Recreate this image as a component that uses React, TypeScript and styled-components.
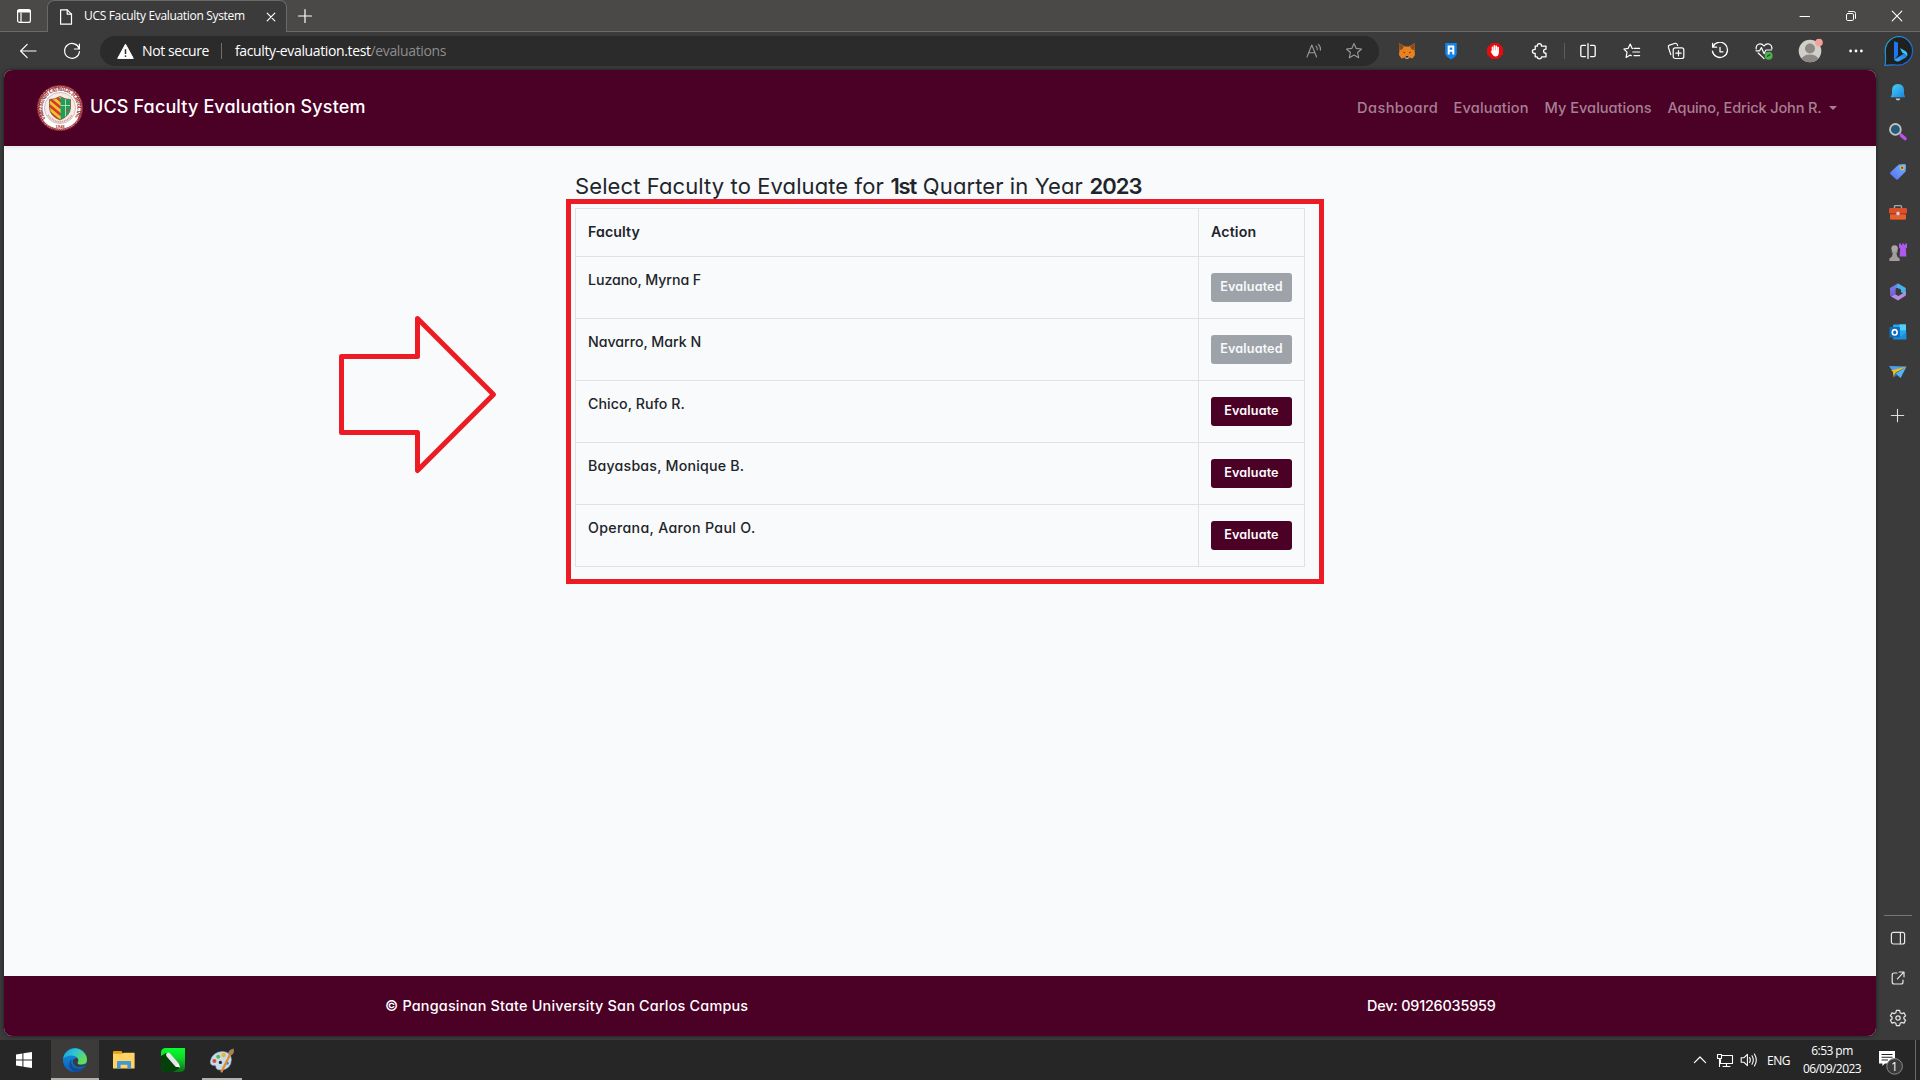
import React from 'react';
import styled, { createGlobalStyle } from 'styled-components';

const MAROON = '#4b0026';
const POP = `Inter, 'Open Sans', sans-serif`;
const UI = `'Open Sans', 'Noto Sans', sans-serif`;

const Global = createGlobalStyle`
  * { box-sizing: border-box; }
  html, body { margin: 0; padding: 0; }
  body { width: 1920px; height: 1080px; overflow: hidden; background: #3b3b3b; font-family: ${UI}; }
  svg { display: block; flex: none; }
`;

const Screen = styled.div`
  position: relative;
  width: 1920px;
  height: 1080px;
  display: flex;
  flex-direction: column;
`;

/* browser chrome */
const TabStrip = styled.header`
  height: 32px;
  display: flex;
  align-items: flex-end;
  background: #4b4947;
  box-shadow: inset 0 -1px 0 #6b6a68;
`;
const StripCell = styled.div<{ $w: number }>`
  width: ${p => p.$w}px;
  height: 32px;
  display: flex;
  align-items: center;
  justify-content: center;
`;
const Tab = styled.div`
  width: 240px;
  height: 32px;
  display: flex;
  align-items: center;
  padding: 0 9px 0 10px;
  background: #3b3b3b;
  border: 1px solid #6b6a68;
  border-bottom: 0;
  border-radius: 7px 7px 0 0;
`;
const TabTitle = styled.span`
  flex: 1;
  margin: -2px 0 0 10px;
  color: #fff;
  font-size: 12px;
  line-height: 16px;
  letter-spacing: -0.33px;
  white-space: nowrap;
`;
const Spacer = styled.div`
  flex: 1;
`;
const Toolbar = styled.div`
  height: 38px;
  display: flex;
  align-items: center;
  background: #3b3b3b;
`;
const ToolCell = styled.div<{ $w?: number }>`
  width: ${p => p.$w ?? 44}px;
  height: 38px;
  display: flex;
  align-items: center;
  justify-content: center;
`;
const Address = styled.div`
  width: 1279px;
  height: 30px;
  margin: 0 6px 0 5px;
  display: flex;
  align-items: center;
  padding-left: 17px;
  border-radius: 15px;
  background: #2b2b2b;
  color: #fff;
  font-size: 14px;
  white-space: nowrap;
`;
const Security = styled.span`
  margin: -1px 0 0 8px;
  width: 79px;
  letter-spacing: -0.4px;
`;
const Bar = styled.i<{ $h: number; $c: string }>`
  width: 1px;
  height: ${p => p.$h}px;
  background: ${p => p.$c};
`;
const Url = styled.span`
  flex: 1;
  margin: -1px 0 0 13px;
  letter-spacing: -0.37px;
  em { font-style: normal; color: #8d8d8d; }
`;

const Middle = styled.div`
  height: 970px;
  display: flex;
  padding-left: 4px;
  background: #3b3b3b;
`;
const Sidebar = styled.aside`
  width: 44px;
  height: 970px;
  display: flex;
  flex-direction: column;
  align-items: center;
  padding: 2px 0 2px;
`;
const SideCell = styled.div<{ $h?: number }>`
  height: ${p => p.$h ?? 40}px;
  display: flex;
  align-items: center;
  justify-content: center;
`;
const SideRule = styled.i`
  width: 28px;
  height: 1px;
  margin-bottom: 2px;
  background: #767676;
`;

/* web page */
const Page = styled.div`
  width: 1872px;
  height: 966px;
  display: flex;
  flex-direction: column;
  border-radius: 8px;
  overflow: hidden;
  background: #f8fafc;
  box-shadow: 0 0 4px rgba(0, 0, 0, 0.5);
  font-family: ${POP};
  font-feature-settings: 'cv11';
  color: #212529;
`;
const Navbar = styled.nav`
  height: 76px;
  display: flex;
  align-items: center;
  padding: 0 39px 0 32px;
  background: ${MAROON};
  box-shadow: 0 2px 4px rgba(0, 0, 0, 0.075);
`;
const Brand = styled.span`
  flex: 1;
  margin: -3px 0 0 6px;
  color: #fff;
  font-size: 18px;
  font-weight: 450;
  letter-spacing: 0.14px;
`;
const NavLinks = styled.div`
  display: flex;
  align-items: center;
  gap: 16px;
`;
const NavLink = styled.a<{ $w: number; $ls: number }>`
  width: ${p => p.$w}px;
  display: flex;
  align-items: center;
  line-height: 18px;
  color: #a58092;
  font-size: 14.6px;
  font-weight: 450;
  letter-spacing: ${p => p.$ls}px;
  white-space: nowrap;
`;
const Caret = styled.i`
  margin-left: 7px;
  border: 4px solid transparent;
  border-top-color: #a58092;
  border-bottom: 0;
`;
const Main = styled.main`
  flex: 1;
  display: flex;
  flex-direction: column;
  padding: 21px 0 0 571px;
`;
const Heading = styled.h4`
  margin: 0 0 3px;
  height: 38px;
  display: flex;
  align-items: center;
  font-size: 22px;
  line-height: 32px;
  font-weight: 400;
  white-space: nowrap;
`;
const Phrase = styled.span<{ $ls: number; $bold?: boolean }>`
  margin-right: 6.6px;
  font-weight: ${p => (p.$bold ? 600 : 400)};
  letter-spacing: ${p => p.$ls}px;
`;
const Table = styled.div`
  width: 730px;
  border: 1px solid #dee2e6;
`;
const Row = styled.div<{ $head?: boolean }>`
  height: ${p => (p.$head ? 48 : 62)}px;
  display: grid;
  grid-template-columns: 622px 1fr;
  border-bottom: 1px solid #dee2e6;
  font-weight: ${p => (p.$head ? 600 : 450)};
  &:last-child { border-bottom: 0; height: 61px; }
`;
const Cell = styled.div<{ $ls?: number }>`
  padding: 12px;
  font-size: 14.2px;
  line-height: 22px;
  letter-spacing: ${p => p.$ls ?? 0}px;
  & + & { border-left: 1px solid #dee2e6; }
`;
const EvalButton = styled.button<{ $done: boolean }>`
  display: block;
  width: 81px;
  height: 29px;
  margin-top: 4px;
  padding: 0 0 2px;
  border: 0;
  border-radius: 3px;
  background: ${p => (p.$done ? '#9ea3a9' : MAROON)};
  color: ${p => (p.$done ? '#f8fafc' : '#fff')};
  font-family: ${POP};
  font-feature-settings: 'cv11';
  font-size: 12.6px;
  font-weight: 600;
  letter-spacing: 0.14px;
`;
const Footer = styled.footer`
  height: 60px;
  display: flex;
  align-items: center;
  padding: 0 0 2px 381px;
  background: ${MAROON};
  color: #fff;
  font-size: 14.4px;
  font-weight: 500;
`;
const FooterText = styled.span<{ $w: number; $ls: number }>`
  width: ${p => p.$w}px;
  letter-spacing: ${p => p.$ls}px;
`;

/* annotations drawn over the page */
const MarkBox = styled.div`
  position: absolute;
  left: 566px;
  top: 199px;
  width: 758px;
  height: 385px;
  border: 5px solid #ed1c24;
`;
const MarkArrow = styled.svg`
  position: absolute;
  left: 336px;
  top: 312px;
`;

/* taskbar */
const Taskbar = styled.div`
  height: 40px;
  display: flex;
  align-items: center;
  background: #262626;
  color: #fff;
  font-size: 12px;
`;
const Task = styled.div<{ $w: number; $active?: boolean; $open?: boolean }>`
  width: ${p => p.$w}px;
  height: 40px;
  display: flex;
  align-items: center;
  justify-content: center;
  background: ${p => (p.$active ? '#3d3b39' : 'transparent')};
  box-shadow: ${p => (p.$active || p.$open ? 'inset 0 -2px 0 #b3b0ad' : 'none')};
`;
const StartTask = styled(Task)`
  padding-right: 3px;
`;
const Lang = styled.span`
  width: 24px;
  letter-spacing: -0.45px;
`;
const Clock = styled.div`
  width: 62px;
  margin-left: 10px;
  text-align: center;
  line-height: 18px;
  letter-spacing: -0.55px;
`;
const Line = ({ s = 20, w = 1.2, c = '#fff', children }: { s?: number; w?: number; c?: string; children: React.ReactNode }) => (
  <svg width={s} height={s} viewBox={`0 0 ${s} ${s}`} fill="none" stroke={c} strokeWidth={w} strokeLinecap="round" strokeLinejoin="round">
    {children}
  </svg>
);
const Art = ({ s = 20, children }: { s?: number; children: React.ReactNode }) => (
  <svg width={s} height={s} viewBox={`0 0 ${s} ${s}`}>{children}</svg>
);

const Seal = () => (
  <svg width="48" height="48" viewBox="0 0 48 48">
    <defs>
      <path id="sealTop" d="M9.6 34.5A17.6 17.6 0 1 1 38.4 34.5" />
      <clipPath id="sealShield"><path d="M13.5 15.5Q19 15.5 24 12.5Q29 15.5 34.5 15.5V24Q34 32 24 36Q14 32 13.5 24Z" /></clipPath>
    </defs>
    <circle cx="24" cy="24" r="22.2" fill="#fff" stroke="#a33035" strokeWidth="1.8" strokeDasharray="1.6 .7" />
    <circle cx="24" cy="24" r="21.2" fill="none" stroke="#a8383c" strokeWidth="1" />
    <text fontFamily="Liberation Serif, serif" fontSize="5.6" fontWeight="700" fill="#8f1f25" stroke="#8f1f25" strokeWidth=".2"><textPath href="#sealTop" textLength="75" lengthAdjust="spacingAndGlyphs">URBIZTONDO CATHOLIC SCHOOL INC</textPath></text>
    <circle cx="24" cy="24" r="15.6" fill="#f7ebe9" stroke="#c9a29e" strokeWidth=".7" />
    <g clipPath="url(#sealShield)">
      <rect x="13" y="12" width="11.5" height="25" fill="#f0c52c" />
      <path d="M13 14L25 24M13 21L25 31M13 28L25 38M18 11L26 18" stroke="#d8382c" strokeWidth="2.6" />
      <rect x="24.5" y="12" width="11" height="25" fill="#1f9d55" />
      <path d="M24.5 21.5H35M29.5 14V34" stroke="#c9e6d2" strokeWidth=".8" />
      <path d="M30 27L31.5 24.5L32.5 27Z" fill="#e33" />
    </g>
    <path d="M13.5 15.5Q19 15.5 24 12.5Q29 15.5 34.5 15.5V24Q34 32 24 36Q14 32 13.5 24Z" fill="none" stroke="#7c5a3a" strokeWidth=".8" />
    <path d="M12 31Q16 37 24 38Q32 37 36 31" fill="none" stroke="#c98e88" strokeWidth="1.6" strokeDasharray="1 .8" />
    <text x="24" y="44" fontFamily="Liberation Serif, serif" fontSize="4.6" fontWeight="700" fill="#9b2a2f" textAnchor="middle">1948</text>
  </svg>
);

const BingLogo = () => (
  <svg width="32" height="32" viewBox="0 0 32 32">
    <defs>
      <linearGradient id="bg1" x1="0" y1="0" x2="1" y2="1"><stop offset="0" stopColor="#18b4e6" /><stop offset="1" stopColor="#1b56d8" /></linearGradient>
      <linearGradient id="bg2" x1="0" y1="1" x2="1" y2="0"><stop offset="0" stopColor="#37b8f5" /><stop offset="1" stopColor="#1f6fe8" /></linearGradient>
    </defs>
    <path d="M16.5 1.5A14.3 14.3 0 1 1 14 30Q8 29.4 2 30.4Q3 26 2.3 17A14.3 14.3 0 0 1 16.5 1.5Z" fill="#202020" stroke="url(#bg1)" strokeWidth="1.2" />
    <path d="M11 6.2L15 7.6V20L11.5 25.2Q11 24.6 11 23.5Z" fill="#1b78ee" />
    <path d="M11.4 24.8L22.5 17.5Q25 20 23 22.5L15.5 26.4Q12.6 27 11.4 24.8Z" fill="url(#bg2)" />
    <path d="M17 13L22.4 16Q25 18 24.2 21.2Q22.6 18.7 19.2 17.8Z" fill="#35c8f2" />
  </svg>
);

const faculty = [
  { name: 'Luzano, Myrna F', done: true, ls: -0.09 },
  { name: 'Navarro, Mark N', done: true, ls: -0.02 },
  { name: 'Chico, Rufo R.', done: false, ls: 0.08 },
  { name: 'Bayasbas, Monique B.', done: false, ls: 0.2 },
  { name: 'Operana, Aaron Paul O.', done: false, ls: 0.33 },
];

export default function App() {
  return (
    <Screen>
      <Global />
      <TabStrip>
        <StripCell $w={47}>
          <Line s={16} w={1.2}><rect x="1.6" y="1.6" width="12.8" height="12.8" rx="2" /><path d="M2 3.6H14M2 2.6H14" strokeWidth="1.6" /><path d="M5 5V14" /></Line>
        </StripCell>
        <Tab>
          <Line s={16} w={1.2}><path d="M2.6 .8H9.2L13.5 5.1V15.2H2.6Z" /><path d="M9.2 .8V5.1H13.5" /></Line>
          <TabTitle>UCS Faculty Evaluation System</TabTitle>
          <Line s={12} w={1.2}><path d="M2.2 2.2L9.8 9.8M9.8 2.2L2.2 9.8" /></Line>
        </Tab>
        <StripCell $w={35}><Line s={16} w={1.2}><path d="M8 1.5V14.5M1.5 8H14.5" /></Line></StripCell>
        <Spacer />
        <StripCell $w={46}><Line s={12} w={1}><path d="M1 6.5H10.5" /></Line></StripCell>
        <StripCell $w={46}><Line s={12} w={1}><rect x="1.5" y="3.5" width="7" height="7" rx="1.3" /><path d="M3.6 1.5H8.5Q10.5 1.5 10.5 3.5V8.4" /></Line></StripCell>
        <StripCell $w={46}><Line s={12} w={1.1}><path d="M1.2 1.2L10.8 10.8M10.8 1.2L1.2 10.8" /></Line></StripCell>
      </TabStrip>

      <Toolbar>
        <ToolCell $w={55}><Line s={18} w={1.2}><path d="M17 9H1.8M8.2 2.4L1.6 9L8.2 15.6" /></Line></ToolCell>
        <ToolCell $w={34}><Line s={18} w={1.2}><path d="M16.2 7A7.4 7.4 0 1 0 16.4 9.6M16.4 2V7H11.4" /></Line></ToolCell>
        <Spacer />
        <Address>
          <Art s={17}><path d="M8.5 1.2L16.3 15.4H.7Z" fill="#fff" stroke="#fff" strokeWidth="1" strokeLinejoin="round" /><path d="M8.5 6.2V11" stroke="#2b2b2b" strokeWidth="1.5" /><circle cx="8.5" cy="13.1" r=".9" fill="#2b2b2b" /></Art>
          <Security>Not secure</Security>
          <Bar $h={16} $c="#6d6d6d" />
          <Url>faculty-evaluation.test<em>/evaluations</em></Url>
          <ToolCell $w={40}>
            <Line s={18} w={1.1} c="#9a9a9a"><path d="M2 15L6.8 3L11.6 15M3.8 10.8H9.8M11 4.2Q12.6 5.8 12.2 7.8M13.4 2.4Q16 5 15.4 8.2" /></Line>
          </ToolCell>
          <ToolCell $w={40}>
            <Line s={18} w={1.1} c="#9a9a9a"><path d="M9 1.6L11.2 6.4L16.5 7L12.6 10.5L13.7 15.8L9 13.1L4.3 15.8L5.4 10.5L1.5 7L6.8 6.4Z" /></Line>
          </ToolCell>
          <ToolCell $w={5} />
        </Address>
        <ToolCell>
          <Art s={18}>
            <path d="M1 1L7 4.5H11L17 1L16.6 9L17 13L14.5 16.5L11 15.5L9.8 17H8.2L7 15.5L3.5 16.5L1 13L1.4 9Z" fill="#e8821e" />
            <path d="M1 1L6 4.6L4.2 7.6L1.4 8ZM17 1L12 4.6L13.8 7.6L16.6 8Z" fill="#8a4b1d" />
            <path d="M4.6 9.4L7 10.3L6.5 11.5ZM13.4 9.4L11 10.3L11.5 11.5Z" fill="#5b3418" />
            <path d="M7 14H11L10.6 16.6H7.4Z" fill="#d5bfb2" /><rect x="7.6" y="14" width="2.8" height="1.6" fill="#25252c" />
          </Art>
        </ToolCell>
        <ToolCell>
          <Art s={18}><path d="M3.2 1H14.8V12Q13.5 15.4 9 17.4Q4.5 15.4 3.2 12Z" fill="#1283ea" /><path d="M6.7 12.6V4.6H11.3V12.6M6.7 8.8H11.3" stroke="#fff" strokeWidth="2" fill="none" /></Art>
        </ToolCell>
        <ToolCell>
          <Art s={18}><path d="M5.7 1H12.3L17 5.7V12.3L12.3 17H5.7L1 12.3V5.7Z" fill="#e40d0d" /><path d="M6.5 9V5.4M8.4 8.5V3.8M10.3 8.5V4.2M12.1 9V5.6" stroke="#fff" strokeWidth="1.6" strokeLinecap="round" /><path d="M5.8 8.2H12.9V11Q12.4 14.6 9.6 14.6Q7.6 14.5 6.4 12.4L4.6 9.4Q5.2 8.6 6.2 10Z" fill="#fff" /></Art>
        </ToolCell>
        <ToolCell $w={45}>
          <Line s={18} w={1.3}><path d="M4.2 4.2H6.3Q6.2 1.6 8.4 1.6T10.5 4.2H15V7.2Q12.6 7.2 12.6 9.2T15 11.2V14.8H10.6Q10.5 16.8 8.4 16.8T6.2 14.8H4.2V11.4Q1.4 11.4 1.4 9.4T4.2 7.4Z" /></Line>
        </ToolCell>
        <ToolCell $w={4}><Bar $h={16} $c="#5d5d5d" /></ToolCell>
        <ToolCell>
          <Line s={18} w={1.3}><path d="M6.4 3.4H3.2Q1.8 3.4 1.8 4.8V13.2Q1.8 14.6 3.2 14.6H6.4M11.6 3.4H14.8Q16.2 3.4 16.2 4.8V13.2Q16.2 14.6 14.8 14.6H11.6M9 1.6V16.4" /></Line>
        </ToolCell>
        <ToolCell>
          <Line s={18} w={1.2}><path d="M9.5 6.4H9.2L7.2 2L5.1 6.4L.9 7L4 10.2L3.1 15.4L7.2 13.1L8.4 13.7M11 6.4H16.6M9.8 10H16.6M11 13.6H16.6" /></Line>
        </ToolCell>
        <ToolCell>
          <Line s={18} w={1.2}><rect x="6.2" y="5.9" width="10.6" height="10.6" rx="2" /><path d="M11.5 8.6V13.8M8.9 11.2H14.1M3.8 12.6L1.4 5.2Q1 3.7 2.5 3.1L8.2 1.3Q9.7 1 10.2 2.4L10.6 3.6" /></Line>
        </ToolCell>
        <ToolCell>
          <Line s={18} w={1.3}><path d="M2 4.6A7.6 7.6 0 1 1 1.4 9.2M1.6 1.4V5.2H5.6M9 5.4V9.8H12" /></Line>
        </ToolCell>
        <ToolCell>
          <Art s={18}>
            <path d="M1.2 7Q.6 3.6 3.4 2.2Q6.6 1 9 4Q11.4 1 14.6 2.2Q17.4 3.6 16.8 7M1 8.8H4.6L6.4 5.6L9 11.6L11 8H16.4M3.2 11L9 16.6" fill="none" stroke="#fff" strokeWidth="1.2" strokeLinejoin="round" strokeLinecap="round" />
            <circle cx="13.6" cy="13.8" r="4" fill="#4caf50" /><path d="M12 14.6L15.3 12.6" stroke="#1f4d22" strokeWidth="1.2" />
          </Art>
        </ToolCell>
        <ToolCell $w={48}>
          <Art s={26}>
            <clipPath id="avatarClip"><circle cx="13" cy="13" r="11.3" /></clipPath>
            <circle cx="13" cy="13" r="11.3" fill="#d2cfcb" />
            <g clipPath="url(#avatarClip)" fill="#8c8884"><circle cx="13" cy="10.5" r="5" /><ellipse cx="13" cy="21.5" rx="8.3" ry="5" /></g>
            <circle cx="22" cy="4.6" r="3.8" fill="#f5a19a" />
          </Art>
        </ToolCell>
        <ToolCell $w={44}><Art s={16}><g fill="#fff"><circle cx="2.6" cy="8" r="1.4" /><circle cx="8" cy="8" r="1.4" /><circle cx="13.4" cy="8" r="1.4" /></g></Art></ToolCell>
        <ToolCell $w={42}><BingLogo /></ToolCell>
      </Toolbar>

      <Middle>
        <Page>
          <Navbar>
            <Seal />
            <Brand>UCS Faculty Evaluation System</Brand>
            <NavLinks>
              <NavLink $w={80.5} $ls={0.42}>Dashboard</NavLink>
              <NavLink $w={75} $ls={0.16}>Evaluation</NavLink>
              <NavLink $w={107} $ls={0}>My Evaluations</NavLink>
              <NavLink $w={169.5} $ls={-0.17}>Aquino, Edrick John R.<Caret /></NavLink>
            </NavLinks>
          </Navbar>
          <Main>
            <Heading>
              <Phrase $ls={0.1}>Select Faculty to Evaluate for</Phrase>
              <Phrase $ls={-1.1} $bold>1st</Phrase>
              <Phrase $ls={0.1}>Quarter in Year</Phrase>
              <Phrase $ls={-1} $bold>2023</Phrase>
            </Heading>
            <Table>
              <Row $head><Cell $ls={0.08}>Faculty</Cell><Cell $ls={0.16}>Action</Cell></Row>
              {faculty.map(f => (
                <Row key={f.name}>
                  <Cell $ls={f.ls}>{f.name}</Cell>
                  <Cell><EvalButton $done={f.done}>{f.done ? 'Evaluated' : 'Evaluate'}</EvalButton></Cell>
                </Row>
              ))}
            </Table>
          </Main>
          <Footer>
            <FooterText $w={982} $ls={0.2}>© Pangasinan State University San Carlos Campus</FooterText>
            <FooterText $w={140} $ls={-0.18}>Dev: 09126035959</FooterText>
          </Footer>
        </Page>
        <Sidebar>
          <SideCell>
            <Art s={20}><defs><linearGradient id="bell" x1="0" y1="0" x2="1" y2="1"><stop offset="0" stopColor="#4fd0f7" /><stop offset="1" stopColor="#1785dd" /></linearGradient></defs><path d="M10 2Q16 2.4 16 8.4V12L17.3 15.2H2.7L4 12V8.4Q4 2.4 10 2Z" fill="url(#bell)" /><path d="M7.6 16.4H12.4Q12 18.4 10 18.4T7.6 16.4Z" fill="#c9c9c9" /></Art>
          </SideCell>
          <SideCell>
            <Art s={20}><circle cx="7.4" cy="7.4" r="5.4" fill="#255a78" stroke="#c4c2c0" strokeWidth="1.8" /><path d="M11.8 11.6L13.6 13.2" stroke="#aaa" strokeWidth="1.6" /><path d="M13.4 13.4L17 16.6" stroke="#c04df0" strokeWidth="3.4" strokeLinecap="round" /></Art>
          </SideCell>
          <SideCell>
            <Art s={20}><defs><linearGradient id="tag" x1="0" y1="1" x2="1" y2="0"><stop offset="0" stopColor="#5b6cf5" /><stop offset="1" stopColor="#6db6fa" /></linearGradient></defs><path d="M10.8 2.6L16.4 2Q18 2 18 3.6L17.6 9.4L10 17.3Q9 18.2 8 17.3L2.4 12Q1.6 11 2.4 10.2Z" fill="url(#tag)" /><circle cx="14.2" cy="5.8" r="1.8" fill="#4a55b5" stroke="#f2c230" strokeWidth="1.2" /></Art>
          </SideCell>
          <SideCell>
            <Art s={20}><path d="M6.5 7V4.5Q6.5 3.6 7.4 3.6H12.6Q13.5 3.6 13.5 4.5V7" fill="none" stroke="#a5a5a5" strokeWidth="1.4" /><rect x="1" y="6" width="18" height="5.4" rx="1.2" fill="#d9502a" /><rect x="2" y="11" width="16" height="6.4" rx="1" fill="#b93a1c" /><rect x="2" y="12.5" width="16" height="4.9" rx="1" fill="#e4602f" /><rect x="8.4" y="9.8" width="3.2" height="3.4" rx="1" fill="#d5d5d5" /></Art>
          </SideCell>
          <SideCell>
            <Art s={20}><path d="M11 1.4H13V3H14.2V1.4H16.2V3H17.2V1.4H19V5.4L17.8 6.4L18.4 14.5H11.6L12.2 6.4L11 5.4Z" fill="#b058ee" /><circle cx="6.6" cy="6.4" r="3.2" fill="#a9a7a5" /><path d="M3.6 9H9.6V10.6H8.4L9.2 14.6L11.6 16.6V19H1.4V16.6L4 14.6L4.8 10.6H3.6Z" fill="#a09e9c" /></Art>
          </SideCell>
          <SideCell>
            <Art s={20}><defs><linearGradient id="m1" x1="0" y1="0" x2="0" y2="1"><stop offset="0" stopColor="#7488ea" /><stop offset="1" stopColor="#7a56c8" /></linearGradient></defs><path d="M9.8 1.4L12.4 3L7.6 6.8V13.2L4.6 15.2L2 13.6V6Z" fill="url(#m1)" /><path d="M10 1.4L17.8 6V12.6L13 10.2V7.6L8.4 5.6Z" fill="#45b4ec" /><path d="M17.8 9.6V13.6L10 18.6L3 14.6L7.6 12.4L10.4 14L14.6 11.4Z" fill="#b78be0" /></Art>
          </SideCell>
          <SideCell>
            <Art s={20}><rect x="5" y="2.4" width="13" height="14" rx="1" fill="#28a8ea" /><rect x="11.5" y="2.4" width="6.5" height="6" fill="#50d0f7" /><path d="M4.5 10.5L11.5 15L18.4 10.5V17.4H5.4Z" fill="#1490df" /><rect x="1.4" y="5" width="10.6" height="10.6" rx="1" fill="#0f6cbd" /><ellipse cx="6.7" cy="10.3" rx="2.4" ry="2.7" fill="none" stroke="#fff" strokeWidth="1.6" /></Art>
          </SideCell>
          <SideCell>
            <Art s={20}><path d="M1 4L18.6 4.4L5.4 10.2Z" fill="#46a4ec" /><path d="M18.6 4.4L12.6 16L7.4 11.4Z" fill="#4fb4f7" /><path d="M3 8.4L18.6 4.4L7.6 10.8L5.8 15.6L4.8 9.6Z" fill="#f7b91c" /><path d="M7.2 11.4L5.8 15.6L9.4 13Z" fill="#2a6fc0" /></Art>
          </SideCell>
          <SideCell $h={46}><Line s={16} w={1.1} c="#dedede"><path d="M7.5 2.3V14.7M1.3 8.5H13.7" /></Line></SideCell>
          <Spacer />
          <SideRule />
          <SideCell>
            <Line s={18} w={1.2} c="#e6e6e6"><rect x="2.4" y="3.4" width="13.2" height="11.6" rx="2" /><path d="M11.4 3.6V14.8" /></Line>
          </SideCell>
          <SideCell>
            <Line s={18} w={1.2} c="#e6e6e6"><path d="M8 4H5.2Q3.2 4 3.2 6V13Q3.2 15 5.2 15H12Q14 15 14 13V11M10.2 3H15V7.8M14.8 3.2L8.4 9.8" /></Line>
          </SideCell>
          <SideCell>
            <Line s={18} w={1.2} c="#e6e6e6"><path d="M7.4 1.4H10.6L11.2 3.8L12.6 4.6L15 3.9L16.6 6.7L14.9 8.3V9.7L16.6 11.3L15 14.1L12.6 13.4L11.2 14.2L10.6 16.6H7.4L6.8 14.2L5.4 13.4L3 14.1L1.4 11.3L3.1 9.7V8.3L1.4 6.7L3 3.9L5.4 4.6L6.8 3.8Z" /><circle cx="9" cy="9" r="2.2" /></Line>
          </SideCell>
        </Sidebar>
      </Middle>

      <MarkBox />
      <MarkArrow width="165" height="165" viewBox="0 0 165 165" fill="none" stroke="#ed1c24" strokeWidth="5" strokeLinejoin="round">
        <path d="M5.5 44.5H81.5V6.5L157.5 82.5L81.5 158.5V120.5H5.5Z" />
      </MarkArrow>

      <Taskbar>
        <StartTask $w={51}>
          <Art s={18}><path d="M1 3.4L7.4 2.5V8.5H1ZM8.4 2.3L17 1V8.5H8.4ZM1 9.5H7.4V15.5L1 14.6ZM8.4 9.5H17V17L8.4 15.7Z" fill="#fff" /></Art>
        </StartTask>
        <Task $w={48} $active>
          <Art s={26}>
            <defs>
              <linearGradient id="e1" x1="0" y1="0" x2="1" y2=".4"><stop offset="0" stopColor="#1a9fdc" /><stop offset=".5" stopColor="#2fc3d3" /><stop offset="1" stopColor="#66dd55" /></linearGradient>
              <linearGradient id="e2" x1="0" y1="0" x2="0" y2="1"><stop offset="0" stopColor="#1695e0" /><stop offset="1" stopColor="#0a5fc0" /></linearGradient>
            </defs>
            <circle cx="13" cy="13" r="12" fill="url(#e2)" />
            <path d="M1.2 11.5A12 12 0 0 1 25 12.6Q25 17.6 19 17.8Q15 17.6 15.6 15.4Q17 13.6 15.8 11.4Q14 8.6 9.6 8.4Q4 8.6 1.2 11.5Z" fill="url(#e1)" />
            <path d="M9.4 12Q8 20 15.4 21.6Q20 22.4 23.8 18.6Q20 25 13.4 25Q6.6 23 7.4 16Q7.8 13.4 9.4 12Z" fill="#134a94" />
            <path d="M15.6 11.2Q12 10.2 10.8 13.6Q10.4 18.6 15.6 20Q20 20.6 24 18L24.8 16.4Q22 18 18.4 17.8Q14.8 17.4 15.6 15.4Q17.2 13.4 15.6 11.2Z" fill="#3d3b39" />
          </Art>
        </Task>
        <Task $w={50}>
          <Art s={24}><path d="M1 4Q1 3 2 3H9.5L11 5.4H22V20H1Z" fill="#e5a00d" /><path d="M1 5.8H10L12 4.8H22.6V20.6H1Z" fill="#ffd463" /><path d="M5 20.6V14.2Q5 13 6.2 13H17.8Q19 13 19 14.2V20.6H15.4V16.8H8.6V20.6Z" fill="#3f98d8" /></Art>
        </Task>
        <Task $w={48}>
          <Art s={24}>
            <defs><linearGradient id="cd" x1=".5" y1="0" x2=".5" y2="1"><stop offset="0" stopColor="#04ff2c" /><stop offset=".4" stopColor="#10d92d" /><stop offset="1" stopColor="#0d6a17" /></linearGradient></defs>
            <path d="M5 0H24V19Q24 24 19 24H5Q0 24 0 19V5Q0 0 5 0Z" fill="url(#cd)" />
            <path d="M0 8L5 5L19 20L12 24H5Q0 24 0 19Z" fill="#053f0a" />
            <path d="M7.4 7L15.6 16.4" stroke="#e6e6e6" strokeWidth="4.6" strokeLinecap="round" /><path d="M14.6 18.4L17.8 15.6L19 19.4Z" fill="#fff" />
          </Art>
        </Task>
        <Task $w={5} />
        <Task $w={40} $open>
          <Art s={26}>
            <path d="M13.5 4.5Q22 5 22.4 12.5Q22 22.5 12 23Q6.8 23 7 20Q7.2 17.6 4.2 18.4Q1 18.2 1.4 14Q3.4 5 13.5 4.5Z" fill="#c5dcec" stroke="#8fb3cc" strokeWidth=".6" />
            <circle cx="5.4" cy="14" r="2" fill="#e0483e" /><circle cx="9.2" cy="9.8" r="2" fill="#5cb548" /><circle cx="14.6" cy="8" r="2.2" fill="#f0b428" /><circle cx="18" cy="16" r="1.8" fill="#3c7fd0" /><circle cx="11.4" cy="15.4" r="1.6" fill="#262626" />
            <path d="M21.6 6.4L12.6 24.4" stroke="#e58a2c" strokeWidth="2.2" strokeLinecap="round" /><path d="M19.4 7.2Q18.4 3 24.6 1.4Q26 6.4 22 8.4Z" fill="#a8805c" />
          </Art>
        </Task>
        <Spacer />
        <Task $w={26}><Line s={14} w={1.2}><path d="M1.4 9.6L7 4L12.6 9.6" /></Line></Task>
        <Task $w={24}>
          <Line s={18} w={1.1}><path d="M6 4.5H16.5V12.5H4.5V8.5M10.5 12.5V15.5M7 15.5H14" /><path d="M1.5 3.5H5.5V7.5H1.5ZM3.5 7.5V15.5" /></Line>
        </Task>
        <Task $w={24}>
          <Line s={18} w={1.1}><path d="M1.2 6.8H3.8L7.4 3.4V14.6L3.8 11.2H1.2ZM9.6 6.6Q11 9 9.6 11.4M12 4.8Q14.6 9 12 13.2M14.4 3Q18.2 9 14.4 15" /></Line>
        </Task>
        <Task $w={6} />
        <Lang>ENG</Lang>
        <Clock>6:53 pm<br />06/09/2023</Clock>
        <Task $w={52}>
          <Art s={30}>
            <path d="M5 6H21V18.4H11L8.4 21V18.4H5Z" fill="#fff" /><path d="M7.5 9.5H18.5M7.5 12.2H18.5M7.5 15H14" stroke="#262626" strokeWidth="1.1" />
            <circle cx="20.6" cy="21.4" r="7.8" fill="#3a3a3a" stroke="#8c8c8c" strokeWidth="1" />
            <text x="20.4" y="25.8" fontFamily={UI} fontSize="12" fill="#fff" textAnchor="middle">1</text>
          </Art>
        </Task>
        <Bar $h={40} $c="#6a6a6a" />
        <Task $w={4} />
      </Taskbar>
    </Screen>
  );
}
